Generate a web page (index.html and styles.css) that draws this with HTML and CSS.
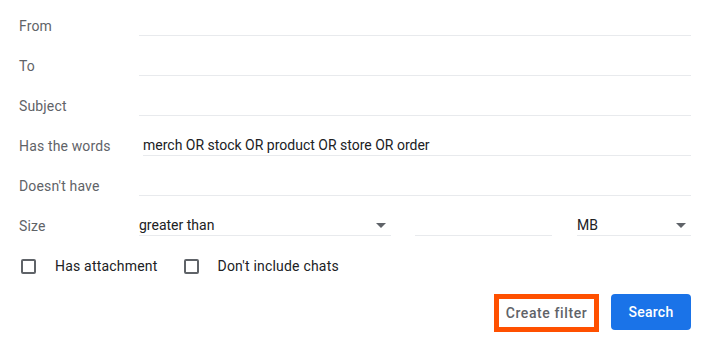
FILE: index.html
```html
<!DOCTYPE html>
<html lang="en">

<head>
  <meta charset="UTF-8" />
  <title>Search filter</title>
  <link rel="stylesheet" href="styles.css">
</head>

<body>
  <div class="filter">
    <div class="row">
      <label class="label">From</label>
      <div class="field"></div>
    </div>
    <div class="row">
      <label class="label">To</label>
      <div class="field"></div>
    </div>
    <div class="row">
      <label class="label">Subject</label>
      <div class="field"></div>
    </div>
    <div class="row">
      <label class="label">Has the words</label>
      <div class="field words">merch OR stock OR product OR store OR order</div>
    </div>
    <div class="row">
      <label class="label">Doesn't have</label>
      <div class="field"></div>
    </div>
    <div class="row">
      <label class="label">Size</label>
      <div class="field select compare">greater than<span class="arrow"></span></div>
      <div class="field amount"></div>
      <div class="field select unit">MB<span class="arrow"></span></div>
    </div>
    <div class="row checks">
      <span class="box"></span><span class="check-text">Has attachment</span>
      <span class="box"></span><span class="check-text">Don't include chats</span>
    </div>
    <div class="actions">
      <button class="btn create">Create filter</button>
      <button class="btn search">Search</button>
    </div>
  </div>
</body>

</html>
```

FILE: styles.css
```css
html,
body {
  margin: 0;
  padding: 0;
  background: #ffffff;
}

.filter {
  padding: 6px 17px 0 19px;
  font-family: Roboto, "Liberation Sans", sans-serif;
  font-size: 14px;
}

.row {
  display: flex;
  align-items: center;
  height: 40px;
}

.label {
  width: 120px;
  flex-shrink: 0;
  color: #5f6368;
  letter-spacing: 0.15px;
}

.field {
  flex: 1;
  height: 19px;
  line-height: 19px;
  border-bottom: 1px solid #e8eaed;
  color: #202124;
}

.field.words {
  margin-left: 4px;
}

.select {
  display: flex;
  align-items: center;
  justify-content: space-between;
}

.arrow {
  width: 0;
  height: 0;
  border-left: 5px solid transparent;
  border-right: 5px solid transparent;
  border-top: 5px solid #5f6368;
  margin-right: 5px;
}

.compare {
  flex: 0 0 252px;
}

.amount {
  flex: 0 0 137px;
  margin-left: 24px;
}

.unit {
  flex: 0 0 114px;
  margin-left: 25px;
}

.checks {
  padding-left: 2px;
}

.box {
  width: 11px;
  height: 11px;
  border: 2px solid #5f6368;
  border-radius: 2px;
  margin-top: 1px;
}

.check-text {
  color: #202124;
  letter-spacing: 0.2px;
  margin-left: 19px;
  margin-right: 26px;
}

.actions {
  display: flex;
  justify-content: flex-end;
  align-items: flex-start;
  gap: 12px;
  margin-top: 8px;
}

.btn {
  font-family: Roboto, "Liberation Sans", sans-serif;
  font-size: 14px;
  font-weight: 500;
  letter-spacing: 0.25px;
  cursor: pointer;
}

.create {
  width: 105px;
  height: 38px;
  padding: 0;
  border: 5px solid #ff5000;
  background: #ffffff;
  color: #5f6368;
  letter-spacing: 0.6px;
}

.search {
  width: 80px;
  height: 36px;
  border: none;
  border-radius: 4px;
  background: #1a73e8;
  color: #ffffff;
}
```
